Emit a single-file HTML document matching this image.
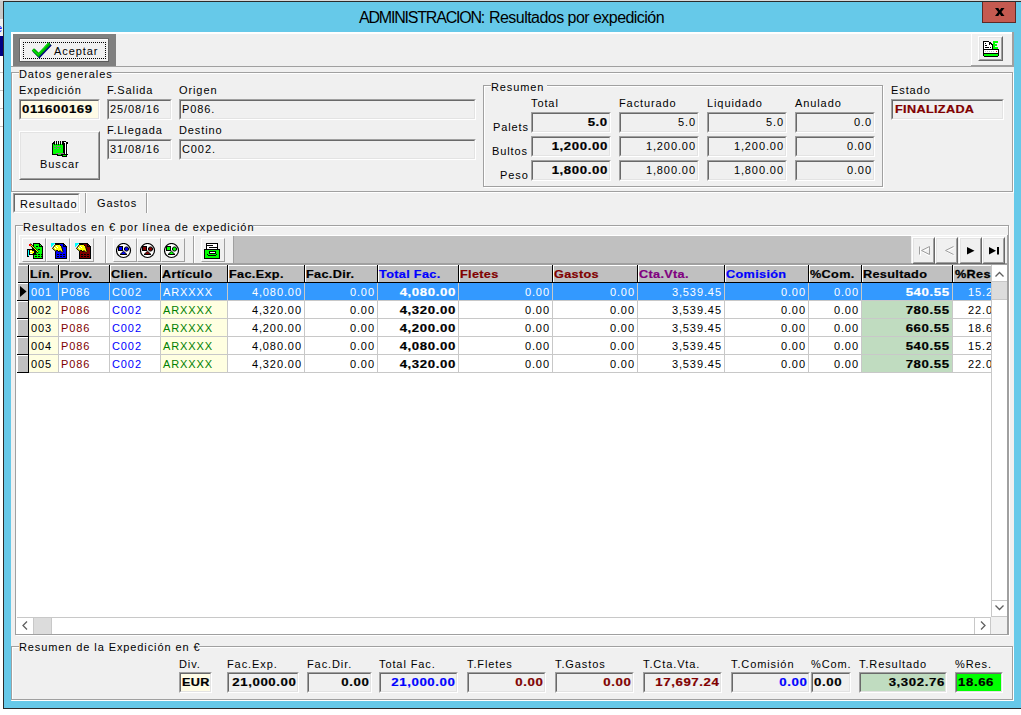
<!DOCTYPE html><html><head><meta charset="utf-8"><style>
html,body{margin:0;padding:0}
body{width:1021px;height:715px;overflow:hidden;position:relative;background:#FFFFFF;font-family:"Liberation Sans",sans-serif}
body div{position:absolute;box-sizing:content-box}
.t{font-size:11px;line-height:13px;white-space:pre;font-family:"Liberation Sans",sans-serif}
svg{position:absolute}
</style></head><body>
<div style="left:0px;top:0px;width:1021px;height:1px;background:#D9D9D9;"></div>
<div style="left:0px;top:1px;width:3px;height:18px;background:#C8C8C8;"></div>
<div style="left:0px;top:19px;width:3px;height:17px;background:#F0F0F0;"></div>
<div style="left:0;top:19px;width:3px;height:17px;overflow:hidden"><div class="t" style="left:-4px;top:3px;color:#0000FF">e</div></div>
<div style="left:0px;top:36px;width:3px;height:20px;background:#000080;"></div>
<div style="left:0px;top:72px;width:3px;height:1px;background:#C8C8C8;"></div>
<div style="left:0px;top:90px;width:3px;height:1px;background:#C8C8C8;"></div>
<div style="left:0px;top:108px;width:3px;height:1px;background:#C8C8C8;"></div>
<div style="left:0px;top:126px;width:3px;height:1px;background:#C8C8C8;"></div>
<div style="left:3px;top:1px;width:1018px;height:708px;background:#2B2B2B;"></div>
<div style="left:4px;top:2px;width:1017px;height:706px;background:#66C9E9;"></div>
<div style="left:359px;top:9px;font-size:16px;line-height:18px;white-space:pre;color:#000;letter-spacing:-1.2px">ADMINISTRACION:</div>
<div style="left:489px;top:9px;font-size:16px;line-height:18px;white-space:pre;color:#000;letter-spacing:-0.54px">Resultados por expedición</div>
<div style="left:982px;top:2px;width:32px;height:20px;background:#C55A50;border:1px solid #5E2A26;border-top:0"></div>
<svg style="left:995px;top:8px" width="10" height="8" viewBox="0 0 10 8"><path d="M0 0 H3.3 L4.75 2.3 L6.2 0 H9.5 L6.4 4 L9.5 8 H6.2 L4.75 5.7 L3.3 8 H0 L3.1 4 Z" fill="#000"/></svg>
<div style="left:11px;top:32px;width:1003px;height:669px;background:#F0F0F0;"></div>
<div style="left:11px;top:32px;width:960px;height:2px;background:#FFFFFF;"></div>
<div style="left:11px;top:32px;width:2px;height:34px;background:#FFFFFF;"></div>
<div style="left:11px;top:66px;width:1003px;height:1px;background:#A0A0A0;"></div>
<div style="left:13px;top:34px;width:103px;height:32px;background:#808080;"></div>
<div style="left:19px;top:38px;width:90px;height:24px;background:#696969;"></div>
<div style="left:20px;top:39px;width:88px;height:22px;background:#FFFFFF;"></div>
<div style="left:21px;top:40px;width:87px;height:21px;background:#F0F0F0;"></div>
<div style="left:20px;top:61px;width:89px;height:1px;background:#5A5A5A;"></div>
<div style="left:23px;top:42px;width:81px;height:15px;border:1px dotted #000"></div>
<svg style="left:30px;top:40px" width="22" height="20" viewBox="0 0 22 20"><path d="M4 10.5 L8.5 15 L18.5 4.5" fill="none" stroke="#000080" stroke-width="3.4" stroke-linecap="square" stroke-linejoin="miter" transform="translate(0.8,1)"/><path d="M4 10.5 L8.5 15 L18.5 4.5" fill="none" stroke="#00B000" stroke-width="3.2" stroke-linecap="square" stroke-linejoin="miter"/><path d="M3 10 L8.3 14.6 L18 3.6" fill="none" stroke="#00FF00" stroke-width="1"/></svg>
<div class="t" style="left:54px;top:45px;color:#000;letter-spacing:0.9px;transform-origin:0 0;-webkit-text-stroke:0px #000;">Aceptar</div>
<div style="left:971px;top:32px;width:42px;height:2px;background:#FFFFFF;"></div>
<div style="left:971px;top:32px;width:1px;height:34px;background:#FFFFFF;"></div>
<div style="left:1012px;top:32px;width:2px;height:35px;background:#A0A0A0;"></div>
<div style="left:971px;top:65px;width:43px;height:2px;background:#A0A0A0;"></div>
<div style="left:978px;top:36px;width:23px;height:23px;border-style:solid;border-width:1px;border-color:#FFFFFF #696969 #696969 #FFFFFF;background:#F0F0F0"></div>
<div style="left:979px;top:37px;width:21px;height:21px;border-style:solid;border-width:1px;border-color:#E3E3E3 #A0A0A0 #A0A0A0 #E3E3E3"></div>
<svg style="left:983px;top:41px" width="17" height="16" viewBox="0 0 17 16" shape-rendering="crispEdges">
<rect x="0" y="0" width="7" height="9" fill="#000"/><path d="M6 0 L10 4 V9 H6 Z" fill="#000"/>
<rect x="1" y="1" width="5" height="7" fill="#FFF"/><path d="M6 1.5 L9 4.5 V8 H6 Z" fill="#FFF"/>
<rect x="6" y="0" width="1" height="1" fill="#F0F0F0"/>
<rect x="2" y="2" width="1" height="1" fill="#000"/><rect x="2" y="4" width="2" height="1" fill="#000"/>
<rect x="2" y="6" width="4" height="1" fill="#000"/><rect x="7" y="6" width="1" height="1" fill="#000"/><rect x="6" y="2" width="1" height="2" fill="#000"/>
<rect x="10" y="0" width="2" height="8" fill="#00FF00"/><rect x="10" y="0" width="5" height="2" fill="#00FF00"/>
<rect x="10" y="3" width="4" height="2" fill="#00FF00"/><rect x="10" y="6" width="5" height="2" fill="#00FF00"/>
<rect x="0" y="8" width="16" height="8" fill="#000"/>
<rect x="1" y="9" width="14" height="3" fill="#FFF"/>
<rect x="2" y="10" width="1" height="1" fill="#C0C0C0"/><rect x="4" y="10" width="1" height="1" fill="#C0C0C0"/><rect x="6" y="10" width="1" height="1" fill="#C0C0C0"/><rect x="8" y="10" width="1" height="1" fill="#C0C0C0"/><rect x="10" y="10" width="1" height="1" fill="#C0C0C0"/>
<rect x="13" y="10" width="1" height="1" fill="#FF0000"/>
<rect x="1" y="13" width="14" height="2" fill="#00FF00"/>
<rect x="0" y="15" width="1" height="1" fill="#F0F0F0"/><rect x="15" y="15" width="1" height="1" fill="#F0F0F0"/>
</svg>
<div style="left:12px;top:73px;width:1000px;height:118px;border:1px solid #FFFFFF"></div>
<div style="left:11px;top:72px;width:1000px;height:118px;border:1px solid #A0A0A0"></div>
<div style="left:19px;top:67px;width:92px;height:12px;background:#F0F0F0;"></div>
<div class="t" style="left:19px;top:68px;color:#000;letter-spacing:0.9px;transform-origin:0 0;-webkit-text-stroke:0px #000;">Datos generales</div>
<div class="t" style="left:19px;top:84px;color:#000;letter-spacing:0.9px;transform-origin:0 0;-webkit-text-stroke:0px #000;">Expedición</div>
<div style="left:19px;top:99px;width:79px;height:19px;border-style:solid;border-width:1px;border-color:#A0A0A0 #FFFFFF #FFFFFF #A0A0A0"></div>
<div style="left:20px;top:100px;width:77px;height:17px;border-style:solid;border-width:1px;border-color:#696969 #E3E3E3 #E3E3E3 #696969;background:#FFFCE6"></div>
<div class="t" style="left:22px;top:103px;color:#000;font-weight:700;letter-spacing:0.5px;transform:scaleX(1.2);transform-origin:0 0;-webkit-text-stroke:0.2px #000;">011600169</div>
<div class="t" style="left:107px;top:84px;color:#000;letter-spacing:0.9px;transform-origin:0 0;-webkit-text-stroke:0px #000;">F.Salida</div>
<div style="left:107px;top:99px;width:63px;height:19px;border-style:solid;border-width:1px;border-color:#A0A0A0 #FFFFFF #FFFFFF #A0A0A0"></div>
<div style="left:108px;top:100px;width:61px;height:17px;border-style:solid;border-width:1px;border-color:#696969 #E3E3E3 #E3E3E3 #696969;background:#F0F0F0"></div>
<div class="t" style="left:110px;top:103px;color:#000;letter-spacing:0.9px;transform-origin:0 0;-webkit-text-stroke:0px #000;">25/08/16</div>
<div class="t" style="left:107px;top:124px;color:#000;letter-spacing:0.9px;transform-origin:0 0;-webkit-text-stroke:0px #000;">F.Llegada</div>
<div style="left:107px;top:139px;width:63px;height:19px;border-style:solid;border-width:1px;border-color:#A0A0A0 #FFFFFF #FFFFFF #A0A0A0"></div>
<div style="left:108px;top:140px;width:61px;height:17px;border-style:solid;border-width:1px;border-color:#696969 #E3E3E3 #E3E3E3 #696969;background:#F0F0F0"></div>
<div class="t" style="left:110px;top:143px;color:#000;letter-spacing:0.9px;transform-origin:0 0;-webkit-text-stroke:0px #000;">31/08/16</div>
<div class="t" style="left:179px;top:84px;color:#000;letter-spacing:0.9px;transform-origin:0 0;-webkit-text-stroke:0px #000;">Origen</div>
<div style="left:179px;top:99px;width:295px;height:19px;border-style:solid;border-width:1px;border-color:#A0A0A0 #FFFFFF #FFFFFF #A0A0A0"></div>
<div style="left:180px;top:100px;width:293px;height:17px;border-style:solid;border-width:1px;border-color:#696969 #E3E3E3 #E3E3E3 #696969;background:#F0F0F0"></div>
<div class="t" style="left:182px;top:103px;color:#000;letter-spacing:0.9px;transform-origin:0 0;-webkit-text-stroke:0px #000;">P086.</div>
<div class="t" style="left:179px;top:124px;color:#000;letter-spacing:0.9px;transform-origin:0 0;-webkit-text-stroke:0px #000;">Destino</div>
<div style="left:179px;top:139px;width:295px;height:19px;border-style:solid;border-width:1px;border-color:#A0A0A0 #FFFFFF #FFFFFF #A0A0A0"></div>
<div style="left:180px;top:140px;width:293px;height:17px;border-style:solid;border-width:1px;border-color:#696969 #E3E3E3 #E3E3E3 #696969;background:#F0F0F0"></div>
<div class="t" style="left:182px;top:143px;color:#000;letter-spacing:0.9px;transform-origin:0 0;-webkit-text-stroke:0px #000;">C002.</div>
<div style="left:19px;top:131px;width:79px;height:47px;border-style:solid;border-width:1px;border-color:#FFFFFF #696969 #696969 #FFFFFF;background:#F0F0F0"></div>
<div style="left:20px;top:132px;width:77px;height:45px;border-style:solid;border-width:1px;border-color:#E3E3E3 #A0A0A0 #A0A0A0 #E3E3E3"></div>
<svg style="left:52px;top:140px" width="17" height="17" viewBox="0 0 17 17" shape-rendering="crispEdges">
<rect x="12" y="2" width="4" height="13" fill="#000"/>
<rect x="13" y="3" width="1" height="11" fill="#FFF"/><rect x="15" y="4" width="1" height="10" fill="#FFF"/>
<rect x="11" y="1" width="3" height="2" fill="#FFF"/><rect x="11" y="1" width="3" height="1" fill="#000"/>
<rect x="0" y="2" width="12" height="13" fill="#000"/>
<rect x="1" y="4" width="10" height="9" fill="#00FF00"/>
<rect x="1" y="13" width="3" height="1" fill="#00FF00"/>
<rect x="2" y="1" width="1" height="4" fill="#000"/><rect x="4" y="1" width="1" height="4" fill="#000"/><rect x="6" y="1" width="1" height="4" fill="#000"/><rect x="8" y="1" width="1" height="4" fill="#000"/><rect x="10" y="1" width="1" height="4" fill="#000"/>
<rect x="3" y="2" width="1" height="2" fill="#F0F0F0"/><rect x="5" y="2" width="1" height="2" fill="#F0F0F0"/><rect x="7" y="2" width="1" height="2" fill="#F0F0F0"/><rect x="9" y="2" width="1" height="2" fill="#F0F0F0"/>
<rect x="0" y="2" width="1" height="1" fill="#F0F0F0"/>
<rect x="5" y="14" width="5" height="2" fill="#000"/><rect x="6" y="14" width="3" height="1" fill="#00FF00"/>
<rect x="10" y="15" width="5" height="2" fill="#000"/><rect x="11" y="15" width="3" height="1" fill="#00FF00"/>
<rect x="4" y="13" width="8" height="1" fill="#808080"/>
<rect x="2" y="6" width="2" height="1" fill="#8C6E8C"/><rect x="5" y="6" width="3" height="1" fill="#8C6E8C"/>
<rect x="2" y="8" width="2" height="1" fill="#8C6E8C"/><rect x="5" y="8" width="2" height="1" fill="#8C6E8C"/><rect x="8" y="8" width="1" height="1" fill="#8C6E8C"/>
</svg>
<div class="t" style="left:40px;top:158px;color:#000;letter-spacing:0.9px;transform-origin:0 0;-webkit-text-stroke:0px #000;">Buscar</div>
<div style="left:484px;top:86px;width:398px;height:100px;border:1px solid #FFFFFF"></div>
<div style="left:483px;top:85px;width:398px;height:100px;border:1px solid #A0A0A0"></div>
<div style="left:491px;top:80px;width:56px;height:12px;background:#F0F0F0;"></div>
<div class="t" style="left:491px;top:81px;color:#000;letter-spacing:0.9px;transform-origin:0 0;-webkit-text-stroke:0px #000;">Resumen</div>
<div class="t" style="left:531px;top:97px;color:#000;letter-spacing:0.9px;transform-origin:0 0;-webkit-text-stroke:0px #000;">Total</div>
<div class="t" style="left:619px;top:97px;color:#000;letter-spacing:0.9px;transform-origin:0 0;-webkit-text-stroke:0px #000;">Facturado</div>
<div class="t" style="left:707px;top:97px;color:#000;letter-spacing:0.9px;transform-origin:0 0;-webkit-text-stroke:0px #000;">Liquidado</div>
<div class="t" style="left:795px;top:97px;color:#000;letter-spacing:0.9px;transform-origin:0 0;-webkit-text-stroke:0px #000;">Anulado</div>
<div class="t" style="left:493px;top:121px;color:#000;letter-spacing:0.9px;transform-origin:0 0;-webkit-text-stroke:0px #000;">Palets</div>
<div class="t" style="left:492px;top:145px;color:#000;letter-spacing:0.9px;transform-origin:0 0;-webkit-text-stroke:0px #000;">Bultos</div>
<div class="t" style="left:500px;top:169px;color:#000;letter-spacing:0.9px;transform-origin:0 0;-webkit-text-stroke:0px #000;">Peso</div>
<div style="left:531px;top:112px;width:78px;height:19px;border-style:solid;border-width:1px;border-color:#A0A0A0 #FFFFFF #FFFFFF #A0A0A0"></div>
<div style="left:532px;top:113px;width:76px;height:17px;border-style:solid;border-width:1px;border-color:#696969 #E3E3E3 #E3E3E3 #696969;background:#F0F0F0"></div>
<div class="t" style="right:413.40px;top:116px;color:#000;font-weight:700;letter-spacing:0.5px;transform:scaleX(1.2);transform-origin:100% 0;-webkit-text-stroke:0.2px #000;text-align:right;">5.0</div>
<div style="left:619px;top:112px;width:78px;height:19px;border-style:solid;border-width:1px;border-color:#A0A0A0 #FFFFFF #FFFFFF #A0A0A0"></div>
<div style="left:620px;top:113px;width:76px;height:17px;border-style:solid;border-width:1px;border-color:#696969 #E3E3E3 #E3E3E3 #696969;background:#F0F0F0"></div>
<div class="t" style="right:325.10px;top:116px;color:#000;letter-spacing:0.9px;transform-origin:100% 0;-webkit-text-stroke:0px #000;text-align:right;">5.0</div>
<div style="left:707px;top:112px;width:78px;height:19px;border-style:solid;border-width:1px;border-color:#A0A0A0 #FFFFFF #FFFFFF #A0A0A0"></div>
<div style="left:708px;top:113px;width:76px;height:17px;border-style:solid;border-width:1px;border-color:#696969 #E3E3E3 #E3E3E3 #696969;background:#F0F0F0"></div>
<div class="t" style="right:237.10px;top:116px;color:#000;letter-spacing:0.9px;transform-origin:100% 0;-webkit-text-stroke:0px #000;text-align:right;">5.0</div>
<div style="left:795px;top:112px;width:78px;height:19px;border-style:solid;border-width:1px;border-color:#A0A0A0 #FFFFFF #FFFFFF #A0A0A0"></div>
<div style="left:796px;top:113px;width:76px;height:17px;border-style:solid;border-width:1px;border-color:#696969 #E3E3E3 #E3E3E3 #696969;background:#F0F0F0"></div>
<div class="t" style="right:149.10px;top:116px;color:#000;letter-spacing:0.9px;transform-origin:100% 0;-webkit-text-stroke:0px #000;text-align:right;">0.0</div>
<div style="left:531px;top:136px;width:78px;height:19px;border-style:solid;border-width:1px;border-color:#A0A0A0 #FFFFFF #FFFFFF #A0A0A0"></div>
<div style="left:532px;top:137px;width:76px;height:17px;border-style:solid;border-width:1px;border-color:#696969 #E3E3E3 #E3E3E3 #696969;background:#F0F0F0"></div>
<div class="t" style="right:413.40px;top:140px;color:#000;font-weight:700;letter-spacing:0.5px;transform:scaleX(1.2);transform-origin:100% 0;-webkit-text-stroke:0.2px #000;text-align:right;">1,200.00</div>
<div style="left:619px;top:136px;width:78px;height:19px;border-style:solid;border-width:1px;border-color:#A0A0A0 #FFFFFF #FFFFFF #A0A0A0"></div>
<div style="left:620px;top:137px;width:76px;height:17px;border-style:solid;border-width:1px;border-color:#696969 #E3E3E3 #E3E3E3 #696969;background:#F0F0F0"></div>
<div class="t" style="right:325.10px;top:140px;color:#000;letter-spacing:0.9px;transform-origin:100% 0;-webkit-text-stroke:0px #000;text-align:right;">1,200.00</div>
<div style="left:707px;top:136px;width:78px;height:19px;border-style:solid;border-width:1px;border-color:#A0A0A0 #FFFFFF #FFFFFF #A0A0A0"></div>
<div style="left:708px;top:137px;width:76px;height:17px;border-style:solid;border-width:1px;border-color:#696969 #E3E3E3 #E3E3E3 #696969;background:#F0F0F0"></div>
<div class="t" style="right:237.10px;top:140px;color:#000;letter-spacing:0.9px;transform-origin:100% 0;-webkit-text-stroke:0px #000;text-align:right;">1,200.00</div>
<div style="left:795px;top:136px;width:78px;height:19px;border-style:solid;border-width:1px;border-color:#A0A0A0 #FFFFFF #FFFFFF #A0A0A0"></div>
<div style="left:796px;top:137px;width:76px;height:17px;border-style:solid;border-width:1px;border-color:#696969 #E3E3E3 #E3E3E3 #696969;background:#F0F0F0"></div>
<div class="t" style="right:149.10px;top:140px;color:#000;letter-spacing:0.9px;transform-origin:100% 0;-webkit-text-stroke:0px #000;text-align:right;">0.00</div>
<div style="left:531px;top:160px;width:78px;height:19px;border-style:solid;border-width:1px;border-color:#A0A0A0 #FFFFFF #FFFFFF #A0A0A0"></div>
<div style="left:532px;top:161px;width:76px;height:17px;border-style:solid;border-width:1px;border-color:#696969 #E3E3E3 #E3E3E3 #696969;background:#F0F0F0"></div>
<div class="t" style="right:413.40px;top:164px;color:#000;font-weight:700;letter-spacing:0.5px;transform:scaleX(1.2);transform-origin:100% 0;-webkit-text-stroke:0.2px #000;text-align:right;">1,800.00</div>
<div style="left:619px;top:160px;width:78px;height:19px;border-style:solid;border-width:1px;border-color:#A0A0A0 #FFFFFF #FFFFFF #A0A0A0"></div>
<div style="left:620px;top:161px;width:76px;height:17px;border-style:solid;border-width:1px;border-color:#696969 #E3E3E3 #E3E3E3 #696969;background:#F0F0F0"></div>
<div class="t" style="right:325.10px;top:164px;color:#000;letter-spacing:0.9px;transform-origin:100% 0;-webkit-text-stroke:0px #000;text-align:right;">1,800.00</div>
<div style="left:707px;top:160px;width:78px;height:19px;border-style:solid;border-width:1px;border-color:#A0A0A0 #FFFFFF #FFFFFF #A0A0A0"></div>
<div style="left:708px;top:161px;width:76px;height:17px;border-style:solid;border-width:1px;border-color:#696969 #E3E3E3 #E3E3E3 #696969;background:#F0F0F0"></div>
<div class="t" style="right:237.10px;top:164px;color:#000;letter-spacing:0.9px;transform-origin:100% 0;-webkit-text-stroke:0px #000;text-align:right;">1,800.00</div>
<div style="left:795px;top:160px;width:78px;height:19px;border-style:solid;border-width:1px;border-color:#A0A0A0 #FFFFFF #FFFFFF #A0A0A0"></div>
<div style="left:796px;top:161px;width:76px;height:17px;border-style:solid;border-width:1px;border-color:#696969 #E3E3E3 #E3E3E3 #696969;background:#F0F0F0"></div>
<div class="t" style="right:149.10px;top:164px;color:#000;letter-spacing:0.9px;transform-origin:100% 0;-webkit-text-stroke:0px #000;text-align:right;">0.00</div>
<div class="t" style="left:891px;top:84px;color:#000;letter-spacing:0.9px;transform-origin:0 0;-webkit-text-stroke:0px #000;">Estado</div>
<div style="left:891px;top:99px;width:111px;height:19px;border-style:solid;border-width:1px;border-color:#A0A0A0 #FFFFFF #FFFFFF #A0A0A0"></div>
<div style="left:892px;top:100px;width:109px;height:17px;border-style:solid;border-width:1px;border-color:#696969 #E3E3E3 #E3E3E3 #696969;background:#F0F0F0"></div>
<div class="t" style="left:895px;top:103px;color:#800000;font-weight:700;letter-spacing:0.3px;transform:scaleX(1.15);transform-origin:0 0;-webkit-text-stroke:0.2px #800000;">FINALIZADA</div>
<div style="left:13px;top:193px;width:65px;height:18px;border-style:solid;border-width:1px;border-color:#A0A0A0 #FFFFFF #FFFFFF #A0A0A0"></div>
<div style="left:14px;top:194px;width:63px;height:16px;border-style:solid;border-width:1px;border-color:#696969 #E3E3E3 #E3E3E3 #696969;background:#F8F8F8"></div>
<div class="t" style="left:20px;top:198px;color:#000;letter-spacing:0.9px;transform-origin:0 0;-webkit-text-stroke:0px #000;">Resultado</div>
<div style="left:85px;top:193px;width:1px;height:20px;background:#A0A0A0;"></div>
<div style="left:86px;top:193px;width:1px;height:20px;background:#FFFFFF;"></div>
<div class="t" style="left:97px;top:197px;color:#000;letter-spacing:0.9px;transform-origin:0 0;-webkit-text-stroke:0px #000;">Gastos</div>
<div style="left:146px;top:193px;width:1px;height:20px;background:#A0A0A0;"></div>
<div style="left:147px;top:193px;width:1px;height:20px;background:#FFFFFF;"></div>
<div style="left:16px;top:226px;width:992px;height:408px;border:1px solid #FFFFFF"></div>
<div style="left:15px;top:225px;width:992px;height:408px;border:1px solid #A0A0A0"></div>
<div style="left:23px;top:220px;width:230px;height:12px;background:#F0F0F0;"></div>
<div class="t" style="left:23px;top:221px;color:#000;letter-spacing:0.9px;transform-origin:0 0;-webkit-text-stroke:0px #000;">Resultados en € por línea de expedición</div>
<div style="left:19px;top:235px;width:990px;height:29px;background:#F0F0F0;"></div>
<div style="left:19px;top:235px;width:990px;height:1px;background:#FFFFFF;"></div>
<div style="left:19px;top:235px;width:1px;height:29px;background:#FFFFFF;"></div>
<div style="left:19px;top:263px;width:990px;height:2px;background:#A0A0A0;"></div>
<div style="left:1007px;top:235px;width:2px;height:30px;background:#A0A0A0;"></div>
<div style="left:234px;top:236px;width:677px;height:27px;background:#C0C0C0;"></div>
<div style="left:22px;top:238px;width:22px;height:22px;background:#F0F0F0;border-style:solid;border-width:1px;border-color:#FFFFFF #A0A0A0 #A0A0A0 #FFFFFF"></div>
<div style="left:46px;top:238px;width:22px;height:22px;background:#F0F0F0;border-style:solid;border-width:1px;border-color:#FFFFFF #A0A0A0 #A0A0A0 #FFFFFF"></div>
<div style="left:70px;top:238px;width:22px;height:22px;background:#F0F0F0;border-style:solid;border-width:1px;border-color:#FFFFFF #A0A0A0 #A0A0A0 #FFFFFF"></div>
<div style="left:105px;top:236px;width:1px;height:27px;background:#A0A0A0;"></div>
<div style="left:106px;top:236px;width:1px;height:27px;background:#FFFFFF;"></div>
<div style="left:113px;top:238px;width:22px;height:22px;background:#F0F0F0;border-style:solid;border-width:1px;border-color:#FFFFFF #A0A0A0 #A0A0A0 #FFFFFF"></div>
<div style="left:137px;top:238px;width:22px;height:22px;background:#F0F0F0;border-style:solid;border-width:1px;border-color:#FFFFFF #A0A0A0 #A0A0A0 #FFFFFF"></div>
<div style="left:161px;top:238px;width:22px;height:22px;background:#F0F0F0;border-style:solid;border-width:1px;border-color:#FFFFFF #A0A0A0 #A0A0A0 #FFFFFF"></div>
<div style="left:193px;top:236px;width:1px;height:27px;background:#A0A0A0;"></div>
<div style="left:194px;top:236px;width:1px;height:27px;background:#FFFFFF;"></div>
<div style="left:201px;top:238px;width:22px;height:22px;background:#F0F0F0;border-style:solid;border-width:1px;border-color:#FFFFFF #A0A0A0 #A0A0A0 #FFFFFF"></div>
<div style="left:233px;top:236px;width:1px;height:27px;background:#A0A0A0;"></div>
<svg style="left:27px;top:243px" width="16" height="16" viewBox="0 0 16 16" shape-rendering="crispEdges"><path d="M6.5 0.5 H12.5 L15.5 3.5 V15.5 H6.5 Z" fill="#00FF00" stroke="#000"/><path d="M12.5 0.5 V3.5 H15.5" fill="none" stroke="#000"/><rect x="8" y="11" width="2" height="1" fill="#000"/><rect x="11" y="11" width="2" height="1" fill="#000"/><rect x="14" y="11" width="2" height="1" fill="#000"/><rect x="8" y="13" width="2" height="1" fill="#000"/><rect x="11" y="13" width="2" height="1" fill="#000"/><rect x="14" y="13" width="2" height="1" fill="#000"/><rect x="9" y="3" width="2" height="1" fill="#000"/><rect x="11" y="6" width="2" height="1" fill="#000"/><rect x="0" y="6" width="2" height="8" fill="#000"/><rect x="0.5" y="7" width="1" height="6" fill="#00FFFF"/><path d="M2 6 H5 L6 5 H7 V6 L5 7 H9 L10 8 L7 9 H8 L8 10 H6 L7 11 H3 L2 12 Z" fill="#FFFF00" stroke="#000" stroke-width="1"/><path d="M3 8 H5 M3 10 H5" stroke="#FFF" stroke-width="1"/><path d="M3 1 L11 9.5" stroke="#000" stroke-width="2" shape-rendering="auto"/><path d="M3.5 1.5 L11 9" stroke="#FFFF00" stroke-width="1" shape-rendering="auto"/><rect x="2" y="1" width="2" height="2" fill="#FF0000"/></svg>
<svg style="left:51px;top:243px" width="16" height="16" viewBox="0 0 16 16" shape-rendering="crispEdges"><path d="M4.5 0.5 H12.5 L15.5 3.5 V15.5 H4.5 Z" fill="#0000FF" stroke="#000"/><path d="M12.5 0.5 V3.5 H15.5" fill="none" stroke="#000"/><rect x="6" y="11" width="2" height="1" fill="#000"/><rect x="9" y="11" width="2" height="1" fill="#000"/><rect x="12" y="11" width="2" height="1" fill="#000"/><rect x="6" y="13" width="2" height="1" fill="#000"/><rect x="9" y="13" width="2" height="1" fill="#000"/><rect x="12" y="13" width="2" height="1" fill="#000"/><path d="M0 0 H4 L0 4 Z" fill="#00FFFF"/><path d="M1.5 5.5 L4.5 1.5 H8.5 L10.5 3.5 L12 8.5 L11 9.5 L9 7.5 L8 9 L6 7 L5 8.5 Z" fill="#FFFF00" stroke="#000" stroke-width="1" shape-rendering="auto"/><path d="M3 4 L5 6 M5 3 L7 5" stroke="#FFF" stroke-width="1" shape-rendering="auto"/></svg>
<svg style="left:75px;top:243px" width="16" height="16" viewBox="0 0 16 16" shape-rendering="crispEdges"><path d="M4.5 0.5 H12.5 L15.5 3.5 V15.5 H4.5 Z" fill="#800000" stroke="#000"/><path d="M12.5 0.5 V3.5 H15.5" fill="none" stroke="#000"/><rect x="6" y="11" width="2" height="1" fill="#000"/><rect x="9" y="11" width="2" height="1" fill="#000"/><rect x="12" y="11" width="2" height="1" fill="#000"/><rect x="6" y="13" width="2" height="1" fill="#000"/><rect x="9" y="13" width="2" height="1" fill="#000"/><rect x="12" y="13" width="2" height="1" fill="#000"/><path d="M0 0 H4 L0 4 Z" fill="#00FFFF"/><path d="M1.5 5.5 L4.5 1.5 H8.5 L10.5 3.5 L12 8.5 L11 9.5 L9 7.5 L8 9 L6 7 L5 8.5 Z" fill="#FFFF00" stroke="#000" stroke-width="1" shape-rendering="auto"/><path d="M3 4 L5 6 M5 3 L7 5" stroke="#FFF" stroke-width="1" shape-rendering="auto"/></svg>
<svg style="left:116px;top:243px" width="16" height="16" viewBox="0 0 16 16">
<circle cx="7.5" cy="7.5" r="7" fill="#FFF" stroke="#000" stroke-width="1.2"/>
<rect x="2.5" y="3.5" width="4" height="4" fill="#0000FF" stroke="#000" stroke-width="1"/>
<circle cx="10.5" cy="6" r="2.1" fill="#0000FF" stroke="#000" stroke-width="1"/>
<path d="M4 11.5 L7.5 8.2 L11 11.5 Z" fill="#0000FF" stroke="#000" stroke-width="1"/>
</svg>
<svg style="left:140px;top:243px" width="16" height="16" viewBox="0 0 16 16">
<circle cx="7.5" cy="7.5" r="7" fill="#FFF" stroke="#000" stroke-width="1.2"/>
<rect x="2.5" y="3.5" width="4" height="4" fill="#800000" stroke="#000" stroke-width="1"/>
<circle cx="10.5" cy="6" r="2.1" fill="#800000" stroke="#000" stroke-width="1"/>
<path d="M4 11.5 L7.5 8.2 L11 11.5 Z" fill="#800000" stroke="#000" stroke-width="1"/>
</svg>
<svg style="left:164px;top:243px" width="16" height="16" viewBox="0 0 16 16">
<circle cx="7.5" cy="7.5" r="7" fill="#FFF" stroke="#000" stroke-width="1.2"/>
<rect x="2.5" y="3.5" width="4" height="4" fill="#00FF00" stroke="#000" stroke-width="1"/>
<circle cx="10.5" cy="6" r="2.1" fill="#00FF00" stroke="#000" stroke-width="1"/>
<path d="M4 11.5 L7.5 8.2 L11 11.5 Z" fill="#00FF00" stroke="#000" stroke-width="1"/>
</svg>
<svg style="left:204px;top:243px" width="16" height="16" viewBox="0 0 16 16" shape-rendering="crispEdges">
<rect x="2" y="0" width="12" height="7" fill="#000"/>
<rect x="3" y="1" width="10" height="5" fill="#FFF"/>
<rect x="3" y="2" width="6" height="1" fill="#000"/><rect x="5" y="4" width="8" height="1" fill="#000"/>
<rect x="0" y="6" width="16" height="10" fill="#000"/>
<rect x="1" y="7" width="14" height="8" fill="#00FF00"/>
<rect x="5" y="8" width="7" height="3" fill="#000"/><rect x="6" y="9" width="5" height="1" fill="#FFF"/>
<rect x="4" y="12" width="8" height="1" fill="#000"/><rect x="3" y="11" width="1" height="1" fill="#000"/><rect x="12" y="11" width="1" height="1" fill="#000"/>
</svg>
<div style="left:912px;top:237px;width:21px;height:25px;border-style:solid;border-width:1px;border-color:#FFFFFF #696969 #696969 #FFFFFF;background:#F0F0F0"></div>
<div style="left:913px;top:238px;width:19px;height:23px;border-style:solid;border-width:1px;border-color:#E3E3E3 #A0A0A0 #A0A0A0 #E3E3E3"></div>
<div style="left:935px;top:237px;width:21px;height:25px;border-style:solid;border-width:1px;border-color:#FFFFFF #696969 #696969 #FFFFFF;background:#F0F0F0"></div>
<div style="left:936px;top:238px;width:19px;height:23px;border-style:solid;border-width:1px;border-color:#E3E3E3 #A0A0A0 #A0A0A0 #E3E3E3"></div>
<div style="left:959px;top:237px;width:21px;height:25px;border-style:solid;border-width:1px;border-color:#FFFFFF #696969 #696969 #FFFFFF;background:#F0F0F0"></div>
<div style="left:960px;top:238px;width:19px;height:23px;border-style:solid;border-width:1px;border-color:#E3E3E3 #A0A0A0 #A0A0A0 #E3E3E3"></div>
<div style="left:982px;top:237px;width:21px;height:25px;border-style:solid;border-width:1px;border-color:#FFFFFF #696969 #696969 #FFFFFF;background:#F0F0F0"></div>
<div style="left:983px;top:238px;width:19px;height:23px;border-style:solid;border-width:1px;border-color:#E3E3E3 #A0A0A0 #A0A0A0 #E3E3E3"></div>
<svg style="left:918px;top:246px" width="13" height="10" viewBox="0 0 13 10"><path d="M1.5 1.5 V9.5 M11.5 0.5 L3.5 5 L11.5 9.5" fill="none" stroke="#FFFFFF" stroke-width="1" transform="translate(1,1)"/><path d="M1.5 0.5 V8.5 M11.5 0.5 L3.5 4.5 L11.5 8.5 Z" fill="none" stroke="#A0A0A0" stroke-width="1"/></svg>
<svg style="left:942px;top:246px" width="13" height="10" viewBox="0 0 13 10"><path d="M11.5 0.5 L3.5 4.5 L11.5 8.5" fill="none" stroke="#FFFFFF" stroke-width="1" transform="translate(1,1)"/><path d="M11.5 0.5 L3.5 4.5 L11.5 8.5" fill="none" stroke="#A0A0A0" stroke-width="1"/></svg>
<svg style="left:967px;top:247px" width="8" height="8" viewBox="0 0 8 8"><path d="M0 0 L7.5 3.75 L0 7.5 Z" fill="#000"/></svg>
<svg style="left:989px;top:247px" width="11" height="8" viewBox="0 0 11 8"><path d="M0 0 L7 3.75 L0 7.5 Z" fill="#000"/><rect x="8" y="0" width="2" height="7.5" fill="#000"/></svg>
<div style="left:16px;top:265px;width:992px;height:369px;background:#FFFFFF;"></div>
<div style="left:17px;top:265px;width:974px;height:17px;background:#C0C0C0;"></div>
<div style="left:17px;top:265px;width:974px;height:1px;background:#FFFFFF;"></div>
<div style="left:17px;top:282px;width:974px;height:1px;background:#000000;"></div>
<div style="left:28px;top:265px;width:1px;height:17px;background:#000000;"></div>
<div style="left:29px;top:265px;width:1px;height:17px;background:#FFFFFF;"></div>
<div style="left:58px;top:265px;width:1px;height:17px;background:#000000;"></div>
<div style="left:59px;top:265px;width:1px;height:17px;background:#FFFFFF;"></div>
<div style="left:109px;top:265px;width:1px;height:17px;background:#000000;"></div>
<div style="left:110px;top:265px;width:1px;height:17px;background:#FFFFFF;"></div>
<div style="left:160px;top:265px;width:1px;height:17px;background:#000000;"></div>
<div style="left:161px;top:265px;width:1px;height:17px;background:#FFFFFF;"></div>
<div style="left:227px;top:265px;width:1px;height:17px;background:#000000;"></div>
<div style="left:228px;top:265px;width:1px;height:17px;background:#FFFFFF;"></div>
<div style="left:304px;top:265px;width:1px;height:17px;background:#000000;"></div>
<div style="left:305px;top:265px;width:1px;height:17px;background:#FFFFFF;"></div>
<div style="left:377px;top:265px;width:1px;height:17px;background:#000000;"></div>
<div style="left:378px;top:265px;width:1px;height:17px;background:#FFFFFF;"></div>
<div style="left:458px;top:265px;width:1px;height:17px;background:#000000;"></div>
<div style="left:459px;top:265px;width:1px;height:17px;background:#FFFFFF;"></div>
<div style="left:552px;top:265px;width:1px;height:17px;background:#000000;"></div>
<div style="left:553px;top:265px;width:1px;height:17px;background:#FFFFFF;"></div>
<div style="left:637px;top:265px;width:1px;height:17px;background:#000000;"></div>
<div style="left:638px;top:265px;width:1px;height:17px;background:#FFFFFF;"></div>
<div style="left:724px;top:265px;width:1px;height:17px;background:#000000;"></div>
<div style="left:725px;top:265px;width:1px;height:17px;background:#FFFFFF;"></div>
<div style="left:808px;top:265px;width:1px;height:17px;background:#000000;"></div>
<div style="left:809px;top:265px;width:1px;height:17px;background:#FFFFFF;"></div>
<div style="left:861px;top:265px;width:1px;height:17px;background:#000000;"></div>
<div style="left:862px;top:265px;width:1px;height:17px;background:#FFFFFF;"></div>
<div style="left:952px;top:265px;width:1px;height:17px;background:#000000;"></div>
<div style="left:953px;top:265px;width:1px;height:17px;background:#FFFFFF;"></div>
<div class="t" style="left:30px;top:268px;color:#000;font-weight:700;letter-spacing:0.3px;transform:scaleX(1.15);transform-origin:0 0;-webkit-text-stroke:0.2px #000;">Lín.</div>
<div class="t" style="left:60px;top:268px;color:#000;font-weight:700;letter-spacing:0.3px;transform:scaleX(1.15);transform-origin:0 0;-webkit-text-stroke:0.2px #000;">Prov.</div>
<div class="t" style="left:111px;top:268px;color:#000;font-weight:700;letter-spacing:0.3px;transform:scaleX(1.15);transform-origin:0 0;-webkit-text-stroke:0.2px #000;">Clien.</div>
<div class="t" style="left:162px;top:268px;color:#000;font-weight:700;letter-spacing:0.3px;transform:scaleX(1.15);transform-origin:0 0;-webkit-text-stroke:0.2px #000;">Artículo</div>
<div class="t" style="left:229px;top:268px;color:#000;font-weight:700;letter-spacing:0.3px;transform:scaleX(1.15);transform-origin:0 0;-webkit-text-stroke:0.2px #000;">Fac.Exp.</div>
<div class="t" style="left:306px;top:268px;color:#000;font-weight:700;letter-spacing:0.3px;transform:scaleX(1.15);transform-origin:0 0;-webkit-text-stroke:0.2px #000;">Fac.Dir.</div>
<div class="t" style="left:379px;top:268px;color:#0000FF;font-weight:700;letter-spacing:0.3px;transform:scaleX(1.15);transform-origin:0 0;-webkit-text-stroke:0.2px #0000FF;">Total Fac.</div>
<div class="t" style="left:460px;top:268px;color:#800000;font-weight:700;letter-spacing:0.3px;transform:scaleX(1.15);transform-origin:0 0;-webkit-text-stroke:0.2px #800000;">Fletes</div>
<div class="t" style="left:554px;top:268px;color:#800000;font-weight:700;letter-spacing:0.3px;transform:scaleX(1.15);transform-origin:0 0;-webkit-text-stroke:0.2px #800000;">Gastos</div>
<div class="t" style="left:639px;top:268px;color:#800080;font-weight:700;letter-spacing:0.3px;transform:scaleX(1.15);transform-origin:0 0;-webkit-text-stroke:0.2px #800080;">Cta.Vta.</div>
<div class="t" style="left:726px;top:268px;color:#0000FF;font-weight:700;letter-spacing:0.3px;transform:scaleX(1.15);transform-origin:0 0;-webkit-text-stroke:0.2px #0000FF;">Comisión</div>
<div class="t" style="left:810px;top:268px;color:#000;font-weight:700;letter-spacing:0.3px;transform:scaleX(1.15);transform-origin:0 0;-webkit-text-stroke:0.2px #000;">%Com.</div>
<div class="t" style="left:863px;top:268px;color:#000;font-weight:700;letter-spacing:0.3px;transform:scaleX(1.15);transform-origin:0 0;-webkit-text-stroke:0.2px #000;">Resultado</div>
<div style="left:953px;top:265px;width:38px;height:17px;overflow:hidden">
<div class="t" style="left:2px;top:3px;font-weight:700;letter-spacing:0.3px;transform:scaleX(1.15);transform-origin:0 0;-webkit-text-stroke:0.3px #000">%Res.</div>
</div>
<div style="left:17px;top:283px;width:11px;height:17px;background:#C0C0C0;"></div>
<div style="left:17px;top:283px;width:11px;height:1px;background:#FFFFFF;"></div>
<div style="left:17px;top:283px;width:1px;height:17px;background:#FFFFFF;"></div>
<div style="left:17px;top:300px;width:12px;height:1px;background:#000000;"></div>
<div style="left:28px;top:283px;width:1px;height:17px;background:#000000;"></div>
<div style="left:29px;top:283px;width:962px;height:17px;background:#3399FF;"></div>
<div style="left:29px;top:300px;width:962px;height:1px;background:#C8C8C8;"></div>
<div style="left:58px;top:283px;width:1px;height:17px;background:#C8C8C8;"></div>
<div style="left:109px;top:283px;width:1px;height:17px;background:#C8C8C8;"></div>
<div style="left:160px;top:283px;width:1px;height:17px;background:#C8C8C8;"></div>
<div style="left:227px;top:283px;width:1px;height:17px;background:#C8C8C8;"></div>
<div style="left:304px;top:283px;width:1px;height:17px;background:#C8C8C8;"></div>
<div style="left:377px;top:283px;width:1px;height:17px;background:#C8C8C8;"></div>
<div style="left:458px;top:283px;width:1px;height:17px;background:#C8C8C8;"></div>
<div style="left:552px;top:283px;width:1px;height:17px;background:#C8C8C8;"></div>
<div style="left:637px;top:283px;width:1px;height:17px;background:#C8C8C8;"></div>
<div style="left:724px;top:283px;width:1px;height:17px;background:#C8C8C8;"></div>
<div style="left:808px;top:283px;width:1px;height:17px;background:#C8C8C8;"></div>
<div style="left:861px;top:283px;width:1px;height:17px;background:#C8C8C8;"></div>
<div style="left:952px;top:283px;width:1px;height:17px;background:#C8C8C8;"></div>
<div class="t" style="left:31px;top:286px;color:#FFFFFF;letter-spacing:0.9px;transform-origin:0 0;-webkit-text-stroke:0px #FFFFFF;">001</div>
<div class="t" style="left:61px;top:286px;color:#FFFFFF;letter-spacing:0.9px;transform-origin:0 0;-webkit-text-stroke:0px #FFFFFF;">P086</div>
<div class="t" style="left:112px;top:286px;color:#FFFFFF;letter-spacing:0.9px;transform-origin:0 0;-webkit-text-stroke:0px #FFFFFF;">C002</div>
<div class="t" style="left:163px;top:286px;color:#FFFFFF;letter-spacing:0.9px;transform-origin:0 0;-webkit-text-stroke:0px #FFFFFF;">ARXXXX</div>
<div class="t" style="right:719.10px;top:286px;color:#FFFFFF;letter-spacing:0.9px;transform-origin:100% 0;-webkit-text-stroke:0px #FFFFFF;text-align:right;">4,080.00</div>
<div class="t" style="right:646.10px;top:286px;color:#FFFFFF;letter-spacing:0.9px;transform-origin:100% 0;-webkit-text-stroke:0px #FFFFFF;text-align:right;">0.00</div>
<div class="t" style="right:565.40px;top:286px;color:#FFFFFF;font-weight:700;letter-spacing:0.5px;transform:scaleX(1.2);transform-origin:100% 0;-webkit-text-stroke:0.2px #FFFFFF;text-align:right;">4,080.00</div>
<div class="t" style="right:471.10px;top:286px;color:#FFFFFF;letter-spacing:0.9px;transform-origin:100% 0;-webkit-text-stroke:0px #FFFFFF;text-align:right;">0.00</div>
<div class="t" style="right:386.10px;top:286px;color:#FFFFFF;letter-spacing:0.9px;transform-origin:100% 0;-webkit-text-stroke:0px #FFFFFF;text-align:right;">0.00</div>
<div class="t" style="right:299.10px;top:286px;color:#FFFFFF;letter-spacing:0.9px;transform-origin:100% 0;-webkit-text-stroke:0px #FFFFFF;text-align:right;">3,539.45</div>
<div class="t" style="right:215.10px;top:286px;color:#FFFFFF;letter-spacing:0.9px;transform-origin:100% 0;-webkit-text-stroke:0px #FFFFFF;text-align:right;">0.00</div>
<div class="t" style="right:162.10px;top:286px;color:#FFFFFF;letter-spacing:0.9px;transform-origin:100% 0;-webkit-text-stroke:0px #FFFFFF;text-align:right;">0.00</div>
<div class="t" style="right:71.40px;top:286px;color:#FFFFFF;font-weight:700;letter-spacing:0.5px;transform:scaleX(1.2);transform-origin:100% 0;-webkit-text-stroke:0.2px #FFFFFF;text-align:right;">540.55</div>
<div style="left:953px;top:283px;width:38px;height:17px;overflow:hidden"><div class="t" style="right:-9px;top:3px;color:#FFFFFF;letter-spacing:0.9px;-webkit-text-stroke:0px">15.20</div></div>
<div style="left:17px;top:301px;width:11px;height:17px;background:#C0C0C0;"></div>
<div style="left:17px;top:301px;width:11px;height:1px;background:#FFFFFF;"></div>
<div style="left:17px;top:301px;width:1px;height:17px;background:#FFFFFF;"></div>
<div style="left:17px;top:318px;width:12px;height:1px;background:#000000;"></div>
<div style="left:28px;top:301px;width:1px;height:17px;background:#000000;"></div>
<div style="left:29px;top:301px;width:29px;height:17px;background:#FFFFE1;"></div>
<div style="left:161px;top:301px;width:66px;height:17px;background:#FFFFE1;"></div>
<div style="left:862px;top:301px;width:90px;height:17px;background:#C0DCC0;"></div>
<div style="left:29px;top:318px;width:962px;height:1px;background:#C8C8C8;"></div>
<div style="left:58px;top:301px;width:1px;height:17px;background:#C8C8C8;"></div>
<div style="left:109px;top:301px;width:1px;height:17px;background:#C8C8C8;"></div>
<div style="left:160px;top:301px;width:1px;height:17px;background:#C8C8C8;"></div>
<div style="left:227px;top:301px;width:1px;height:17px;background:#C8C8C8;"></div>
<div style="left:304px;top:301px;width:1px;height:17px;background:#C8C8C8;"></div>
<div style="left:377px;top:301px;width:1px;height:17px;background:#C8C8C8;"></div>
<div style="left:458px;top:301px;width:1px;height:17px;background:#C8C8C8;"></div>
<div style="left:552px;top:301px;width:1px;height:17px;background:#C8C8C8;"></div>
<div style="left:637px;top:301px;width:1px;height:17px;background:#C8C8C8;"></div>
<div style="left:724px;top:301px;width:1px;height:17px;background:#C8C8C8;"></div>
<div style="left:808px;top:301px;width:1px;height:17px;background:#C8C8C8;"></div>
<div style="left:861px;top:301px;width:1px;height:17px;background:#C8C8C8;"></div>
<div style="left:952px;top:301px;width:1px;height:17px;background:#C8C8C8;"></div>
<div class="t" style="left:31px;top:304px;color:#000;letter-spacing:0.9px;transform-origin:0 0;-webkit-text-stroke:0px #000;">002</div>
<div class="t" style="left:61px;top:304px;color:#800000;letter-spacing:0.9px;transform-origin:0 0;-webkit-text-stroke:0px #800000;">P086</div>
<div class="t" style="left:112px;top:304px;color:#0000FF;letter-spacing:0.9px;transform-origin:0 0;-webkit-text-stroke:0px #0000FF;">C002</div>
<div class="t" style="left:163px;top:304px;color:#008000;letter-spacing:0.9px;transform-origin:0 0;-webkit-text-stroke:0px #008000;">ARXXXX</div>
<div class="t" style="right:719.10px;top:304px;color:#000;letter-spacing:0.9px;transform-origin:100% 0;-webkit-text-stroke:0px #000;text-align:right;">4,320.00</div>
<div class="t" style="right:646.10px;top:304px;color:#000;letter-spacing:0.9px;transform-origin:100% 0;-webkit-text-stroke:0px #000;text-align:right;">0.00</div>
<div class="t" style="right:565.40px;top:304px;color:#000;font-weight:700;letter-spacing:0.5px;transform:scaleX(1.2);transform-origin:100% 0;-webkit-text-stroke:0.2px #000;text-align:right;">4,320.00</div>
<div class="t" style="right:471.10px;top:304px;color:#000;letter-spacing:0.9px;transform-origin:100% 0;-webkit-text-stroke:0px #000;text-align:right;">0.00</div>
<div class="t" style="right:386.10px;top:304px;color:#000;letter-spacing:0.9px;transform-origin:100% 0;-webkit-text-stroke:0px #000;text-align:right;">0.00</div>
<div class="t" style="right:299.10px;top:304px;color:#000;letter-spacing:0.9px;transform-origin:100% 0;-webkit-text-stroke:0px #000;text-align:right;">3,539.45</div>
<div class="t" style="right:215.10px;top:304px;color:#000;letter-spacing:0.9px;transform-origin:100% 0;-webkit-text-stroke:0px #000;text-align:right;">0.00</div>
<div class="t" style="right:162.10px;top:304px;color:#000;letter-spacing:0.9px;transform-origin:100% 0;-webkit-text-stroke:0px #000;text-align:right;">0.00</div>
<div class="t" style="right:71.40px;top:304px;color:#000;font-weight:700;letter-spacing:0.5px;transform:scaleX(1.2);transform-origin:100% 0;-webkit-text-stroke:0.2px #000;text-align:right;">780.55</div>
<div style="left:953px;top:301px;width:38px;height:17px;overflow:hidden"><div class="t" style="right:-9px;top:3px;color:#000;letter-spacing:0.9px;-webkit-text-stroke:0px">22.00</div></div>
<div style="left:17px;top:319px;width:11px;height:17px;background:#C0C0C0;"></div>
<div style="left:17px;top:319px;width:11px;height:1px;background:#FFFFFF;"></div>
<div style="left:17px;top:319px;width:1px;height:17px;background:#FFFFFF;"></div>
<div style="left:17px;top:336px;width:12px;height:1px;background:#000000;"></div>
<div style="left:28px;top:319px;width:1px;height:17px;background:#000000;"></div>
<div style="left:29px;top:319px;width:29px;height:17px;background:#FFFFE1;"></div>
<div style="left:161px;top:319px;width:66px;height:17px;background:#FFFFE1;"></div>
<div style="left:862px;top:319px;width:90px;height:17px;background:#C0DCC0;"></div>
<div style="left:29px;top:336px;width:962px;height:1px;background:#C8C8C8;"></div>
<div style="left:58px;top:319px;width:1px;height:17px;background:#C8C8C8;"></div>
<div style="left:109px;top:319px;width:1px;height:17px;background:#C8C8C8;"></div>
<div style="left:160px;top:319px;width:1px;height:17px;background:#C8C8C8;"></div>
<div style="left:227px;top:319px;width:1px;height:17px;background:#C8C8C8;"></div>
<div style="left:304px;top:319px;width:1px;height:17px;background:#C8C8C8;"></div>
<div style="left:377px;top:319px;width:1px;height:17px;background:#C8C8C8;"></div>
<div style="left:458px;top:319px;width:1px;height:17px;background:#C8C8C8;"></div>
<div style="left:552px;top:319px;width:1px;height:17px;background:#C8C8C8;"></div>
<div style="left:637px;top:319px;width:1px;height:17px;background:#C8C8C8;"></div>
<div style="left:724px;top:319px;width:1px;height:17px;background:#C8C8C8;"></div>
<div style="left:808px;top:319px;width:1px;height:17px;background:#C8C8C8;"></div>
<div style="left:861px;top:319px;width:1px;height:17px;background:#C8C8C8;"></div>
<div style="left:952px;top:319px;width:1px;height:17px;background:#C8C8C8;"></div>
<div class="t" style="left:31px;top:322px;color:#000;letter-spacing:0.9px;transform-origin:0 0;-webkit-text-stroke:0px #000;">003</div>
<div class="t" style="left:61px;top:322px;color:#800000;letter-spacing:0.9px;transform-origin:0 0;-webkit-text-stroke:0px #800000;">P086</div>
<div class="t" style="left:112px;top:322px;color:#0000FF;letter-spacing:0.9px;transform-origin:0 0;-webkit-text-stroke:0px #0000FF;">C002</div>
<div class="t" style="left:163px;top:322px;color:#008000;letter-spacing:0.9px;transform-origin:0 0;-webkit-text-stroke:0px #008000;">ARXXXX</div>
<div class="t" style="right:719.10px;top:322px;color:#000;letter-spacing:0.9px;transform-origin:100% 0;-webkit-text-stroke:0px #000;text-align:right;">4,200.00</div>
<div class="t" style="right:646.10px;top:322px;color:#000;letter-spacing:0.9px;transform-origin:100% 0;-webkit-text-stroke:0px #000;text-align:right;">0.00</div>
<div class="t" style="right:565.40px;top:322px;color:#000;font-weight:700;letter-spacing:0.5px;transform:scaleX(1.2);transform-origin:100% 0;-webkit-text-stroke:0.2px #000;text-align:right;">4,200.00</div>
<div class="t" style="right:471.10px;top:322px;color:#000;letter-spacing:0.9px;transform-origin:100% 0;-webkit-text-stroke:0px #000;text-align:right;">0.00</div>
<div class="t" style="right:386.10px;top:322px;color:#000;letter-spacing:0.9px;transform-origin:100% 0;-webkit-text-stroke:0px #000;text-align:right;">0.00</div>
<div class="t" style="right:299.10px;top:322px;color:#000;letter-spacing:0.9px;transform-origin:100% 0;-webkit-text-stroke:0px #000;text-align:right;">3,539.45</div>
<div class="t" style="right:215.10px;top:322px;color:#000;letter-spacing:0.9px;transform-origin:100% 0;-webkit-text-stroke:0px #000;text-align:right;">0.00</div>
<div class="t" style="right:162.10px;top:322px;color:#000;letter-spacing:0.9px;transform-origin:100% 0;-webkit-text-stroke:0px #000;text-align:right;">0.00</div>
<div class="t" style="right:71.40px;top:322px;color:#000;font-weight:700;letter-spacing:0.5px;transform:scaleX(1.2);transform-origin:100% 0;-webkit-text-stroke:0.2px #000;text-align:right;">660.55</div>
<div style="left:953px;top:319px;width:38px;height:17px;overflow:hidden"><div class="t" style="right:-9px;top:3px;color:#000;letter-spacing:0.9px;-webkit-text-stroke:0px">18.60</div></div>
<div style="left:17px;top:337px;width:11px;height:17px;background:#C0C0C0;"></div>
<div style="left:17px;top:337px;width:11px;height:1px;background:#FFFFFF;"></div>
<div style="left:17px;top:337px;width:1px;height:17px;background:#FFFFFF;"></div>
<div style="left:17px;top:354px;width:12px;height:1px;background:#000000;"></div>
<div style="left:28px;top:337px;width:1px;height:17px;background:#000000;"></div>
<div style="left:29px;top:337px;width:29px;height:17px;background:#FFFFE1;"></div>
<div style="left:161px;top:337px;width:66px;height:17px;background:#FFFFE1;"></div>
<div style="left:862px;top:337px;width:90px;height:17px;background:#C0DCC0;"></div>
<div style="left:29px;top:354px;width:962px;height:1px;background:#C8C8C8;"></div>
<div style="left:58px;top:337px;width:1px;height:17px;background:#C8C8C8;"></div>
<div style="left:109px;top:337px;width:1px;height:17px;background:#C8C8C8;"></div>
<div style="left:160px;top:337px;width:1px;height:17px;background:#C8C8C8;"></div>
<div style="left:227px;top:337px;width:1px;height:17px;background:#C8C8C8;"></div>
<div style="left:304px;top:337px;width:1px;height:17px;background:#C8C8C8;"></div>
<div style="left:377px;top:337px;width:1px;height:17px;background:#C8C8C8;"></div>
<div style="left:458px;top:337px;width:1px;height:17px;background:#C8C8C8;"></div>
<div style="left:552px;top:337px;width:1px;height:17px;background:#C8C8C8;"></div>
<div style="left:637px;top:337px;width:1px;height:17px;background:#C8C8C8;"></div>
<div style="left:724px;top:337px;width:1px;height:17px;background:#C8C8C8;"></div>
<div style="left:808px;top:337px;width:1px;height:17px;background:#C8C8C8;"></div>
<div style="left:861px;top:337px;width:1px;height:17px;background:#C8C8C8;"></div>
<div style="left:952px;top:337px;width:1px;height:17px;background:#C8C8C8;"></div>
<div class="t" style="left:31px;top:340px;color:#000;letter-spacing:0.9px;transform-origin:0 0;-webkit-text-stroke:0px #000;">004</div>
<div class="t" style="left:61px;top:340px;color:#800000;letter-spacing:0.9px;transform-origin:0 0;-webkit-text-stroke:0px #800000;">P086</div>
<div class="t" style="left:112px;top:340px;color:#0000FF;letter-spacing:0.9px;transform-origin:0 0;-webkit-text-stroke:0px #0000FF;">C002</div>
<div class="t" style="left:163px;top:340px;color:#008000;letter-spacing:0.9px;transform-origin:0 0;-webkit-text-stroke:0px #008000;">ARXXXX</div>
<div class="t" style="right:719.10px;top:340px;color:#000;letter-spacing:0.9px;transform-origin:100% 0;-webkit-text-stroke:0px #000;text-align:right;">4,080.00</div>
<div class="t" style="right:646.10px;top:340px;color:#000;letter-spacing:0.9px;transform-origin:100% 0;-webkit-text-stroke:0px #000;text-align:right;">0.00</div>
<div class="t" style="right:565.40px;top:340px;color:#000;font-weight:700;letter-spacing:0.5px;transform:scaleX(1.2);transform-origin:100% 0;-webkit-text-stroke:0.2px #000;text-align:right;">4,080.00</div>
<div class="t" style="right:471.10px;top:340px;color:#000;letter-spacing:0.9px;transform-origin:100% 0;-webkit-text-stroke:0px #000;text-align:right;">0.00</div>
<div class="t" style="right:386.10px;top:340px;color:#000;letter-spacing:0.9px;transform-origin:100% 0;-webkit-text-stroke:0px #000;text-align:right;">0.00</div>
<div class="t" style="right:299.10px;top:340px;color:#000;letter-spacing:0.9px;transform-origin:100% 0;-webkit-text-stroke:0px #000;text-align:right;">3,539.45</div>
<div class="t" style="right:215.10px;top:340px;color:#000;letter-spacing:0.9px;transform-origin:100% 0;-webkit-text-stroke:0px #000;text-align:right;">0.00</div>
<div class="t" style="right:162.10px;top:340px;color:#000;letter-spacing:0.9px;transform-origin:100% 0;-webkit-text-stroke:0px #000;text-align:right;">0.00</div>
<div class="t" style="right:71.40px;top:340px;color:#000;font-weight:700;letter-spacing:0.5px;transform:scaleX(1.2);transform-origin:100% 0;-webkit-text-stroke:0.2px #000;text-align:right;">540.55</div>
<div style="left:953px;top:337px;width:38px;height:17px;overflow:hidden"><div class="t" style="right:-9px;top:3px;color:#000;letter-spacing:0.9px;-webkit-text-stroke:0px">15.20</div></div>
<div style="left:17px;top:355px;width:11px;height:17px;background:#C0C0C0;"></div>
<div style="left:17px;top:355px;width:11px;height:1px;background:#FFFFFF;"></div>
<div style="left:17px;top:355px;width:1px;height:17px;background:#FFFFFF;"></div>
<div style="left:17px;top:372px;width:12px;height:1px;background:#000000;"></div>
<div style="left:28px;top:355px;width:1px;height:17px;background:#000000;"></div>
<div style="left:29px;top:355px;width:29px;height:17px;background:#FFFFE1;"></div>
<div style="left:161px;top:355px;width:66px;height:17px;background:#FFFFE1;"></div>
<div style="left:862px;top:355px;width:90px;height:17px;background:#C0DCC0;"></div>
<div style="left:29px;top:372px;width:962px;height:1px;background:#C8C8C8;"></div>
<div style="left:58px;top:355px;width:1px;height:17px;background:#C8C8C8;"></div>
<div style="left:109px;top:355px;width:1px;height:17px;background:#C8C8C8;"></div>
<div style="left:160px;top:355px;width:1px;height:17px;background:#C8C8C8;"></div>
<div style="left:227px;top:355px;width:1px;height:17px;background:#C8C8C8;"></div>
<div style="left:304px;top:355px;width:1px;height:17px;background:#C8C8C8;"></div>
<div style="left:377px;top:355px;width:1px;height:17px;background:#C8C8C8;"></div>
<div style="left:458px;top:355px;width:1px;height:17px;background:#C8C8C8;"></div>
<div style="left:552px;top:355px;width:1px;height:17px;background:#C8C8C8;"></div>
<div style="left:637px;top:355px;width:1px;height:17px;background:#C8C8C8;"></div>
<div style="left:724px;top:355px;width:1px;height:17px;background:#C8C8C8;"></div>
<div style="left:808px;top:355px;width:1px;height:17px;background:#C8C8C8;"></div>
<div style="left:861px;top:355px;width:1px;height:17px;background:#C8C8C8;"></div>
<div style="left:952px;top:355px;width:1px;height:17px;background:#C8C8C8;"></div>
<div class="t" style="left:31px;top:358px;color:#000;letter-spacing:0.9px;transform-origin:0 0;-webkit-text-stroke:0px #000;">005</div>
<div class="t" style="left:61px;top:358px;color:#800000;letter-spacing:0.9px;transform-origin:0 0;-webkit-text-stroke:0px #800000;">P086</div>
<div class="t" style="left:112px;top:358px;color:#0000FF;letter-spacing:0.9px;transform-origin:0 0;-webkit-text-stroke:0px #0000FF;">C002</div>
<div class="t" style="left:163px;top:358px;color:#008000;letter-spacing:0.9px;transform-origin:0 0;-webkit-text-stroke:0px #008000;">ARXXXX</div>
<div class="t" style="right:719.10px;top:358px;color:#000;letter-spacing:0.9px;transform-origin:100% 0;-webkit-text-stroke:0px #000;text-align:right;">4,320.00</div>
<div class="t" style="right:646.10px;top:358px;color:#000;letter-spacing:0.9px;transform-origin:100% 0;-webkit-text-stroke:0px #000;text-align:right;">0.00</div>
<div class="t" style="right:565.40px;top:358px;color:#000;font-weight:700;letter-spacing:0.5px;transform:scaleX(1.2);transform-origin:100% 0;-webkit-text-stroke:0.2px #000;text-align:right;">4,320.00</div>
<div class="t" style="right:471.10px;top:358px;color:#000;letter-spacing:0.9px;transform-origin:100% 0;-webkit-text-stroke:0px #000;text-align:right;">0.00</div>
<div class="t" style="right:386.10px;top:358px;color:#000;letter-spacing:0.9px;transform-origin:100% 0;-webkit-text-stroke:0px #000;text-align:right;">0.00</div>
<div class="t" style="right:299.10px;top:358px;color:#000;letter-spacing:0.9px;transform-origin:100% 0;-webkit-text-stroke:0px #000;text-align:right;">3,539.45</div>
<div class="t" style="right:215.10px;top:358px;color:#000;letter-spacing:0.9px;transform-origin:100% 0;-webkit-text-stroke:0px #000;text-align:right;">0.00</div>
<div class="t" style="right:162.10px;top:358px;color:#000;letter-spacing:0.9px;transform-origin:100% 0;-webkit-text-stroke:0px #000;text-align:right;">0.00</div>
<div class="t" style="right:71.40px;top:358px;color:#000;font-weight:700;letter-spacing:0.5px;transform:scaleX(1.2);transform-origin:100% 0;-webkit-text-stroke:0.2px #000;text-align:right;">780.55</div>
<div style="left:953px;top:355px;width:38px;height:17px;overflow:hidden"><div class="t" style="right:-9px;top:3px;color:#000;letter-spacing:0.9px;-webkit-text-stroke:0px">22.00</div></div>
<div style="left:16px;top:265px;width:1px;height:352px;background:#FFFFFF;"></div>
<div style="left:17px;top:265px;width:1px;height:18px;background:#FFFFFF;"></div>
<svg style="left:20px;top:286px" width="7" height="11" viewBox="0 0 7 11"><path d="M0 0 L6.5 5.5 L0 11 Z" fill="#000"/></svg>
<div style="left:991px;top:265px;width:17px;height:352px;background:#FFFFFF;"></div>
<div style="left:991px;top:265px;width:1px;height:352px;background:#C8C8C8;"></div>
<div style="left:1007px;top:265px;width:1px;height:369px;background:#A0A0A0;"></div>
<div style="left:992px;top:281px;width:15px;height:1px;background:#C8C8C8;"></div>
<div style="left:992px;top:282px;width:15px;height:17px;background:#DCDCDC;"></div>
<div style="left:992px;top:299px;width:15px;height:1px;background:#C8C8C8;"></div>
<div style="left:992px;top:600px;width:15px;height:1px;background:#C8C8C8;"></div>
<svg style="left:995px;top:271px" width="9" height="6" viewBox="0 0 9 6"><path d="M0.5 5.5 L4.5 1.5 L8.5 5.5" fill="none" stroke="#606060" stroke-width="1.3"/></svg>
<svg style="left:995px;top:605px" width="9" height="6" viewBox="0 0 9 6"><path d="M0.5 0.5 L4.5 4.5 L8.5 0.5" fill="none" stroke="#606060" stroke-width="1.3"/></svg>
<div style="left:17px;top:617px;width:974px;height:17px;background:#FFFFFF;"></div>
<div style="left:17px;top:617px;width:974px;height:1px;background:#C8C8C8;"></div>
<div style="left:33px;top:618px;width:1px;height:16px;background:#C8C8C8;"></div>
<div style="left:34px;top:618px;width:17px;height:16px;background:#DCDCDC;"></div>
<div style="left:51px;top:618px;width:1px;height:16px;background:#C8C8C8;"></div>
<div style="left:974px;top:618px;width:1px;height:16px;background:#C8C8C8;"></div>
<div style="left:991px;top:617px;width:16px;height:17px;background:#F0F0F0;"></div>
<div style="left:991px;top:616px;width:16px;height:1px;background:#C8C8C8;"></div>
<div style="left:990px;top:617px;width:1px;height:17px;background:#C8C8C8;"></div>
<div style="left:16px;top:634px;width:992px;height:1px;background:#A0A0A0;"></div>
<svg style="left:22px;top:621px" width="6" height="9" viewBox="0 0 6 9"><path d="M5 0.5 L1 4.5 L5 8.5" fill="none" stroke="#606060" stroke-width="1.3"/></svg>
<svg style="left:980px;top:621px" width="6" height="9" viewBox="0 0 6 9"><path d="M1 0.5 L5 4.5 L1 8.5" fill="none" stroke="#606060" stroke-width="1.3"/></svg>
<div style="left:12px;top:647px;width:1000px;height:52px;border:1px solid #FFFFFF"></div>
<div style="left:11px;top:646px;width:1000px;height:52px;border:1px solid #A0A0A0"></div>
<div style="left:19px;top:640px;width:180px;height:12px;background:#F0F0F0;"></div>
<div class="t" style="left:19px;top:641px;color:#000;letter-spacing:0.9px;transform-origin:0 0;-webkit-text-stroke:0px #000;">Resumen de la Expedición en €</div>
<div class="t" style="left:179px;top:658px;color:#000;letter-spacing:0.9px;transform-origin:0 0;-webkit-text-stroke:0px #000;">Div.</div>
<div style="left:179px;top:672px;width:31px;height:19px;border-style:solid;border-width:1px;border-color:#A0A0A0 #FFFFFF #FFFFFF #A0A0A0"></div>
<div style="left:180px;top:673px;width:29px;height:17px;border-style:solid;border-width:1px;border-color:#696969 #E3E3E3 #E3E3E3 #696969;background:#FFFCE6"></div>
<div class="t" style="left:182px;top:676px;color:#000;font-weight:700;letter-spacing:0.3px;transform:scaleX(1.15);transform-origin:0 0;-webkit-text-stroke:0.2px #000;">EUR</div>
<div class="t" style="left:227px;top:658px;color:#000;letter-spacing:0.9px;transform-origin:0 0;-webkit-text-stroke:0px #000;">Fac.Exp.</div>
<div style="left:227px;top:672px;width:70px;height:19px;border-style:solid;border-width:1px;border-color:#A0A0A0 #FFFFFF #FFFFFF #A0A0A0"></div>
<div style="left:228px;top:673px;width:68px;height:17px;border-style:solid;border-width:1px;border-color:#696969 #E3E3E3 #E3E3E3 #696969;background:#F0F0F0"></div>
<div class="t" style="right:724.40px;top:676px;color:#000;font-weight:700;letter-spacing:0.5px;transform:scaleX(1.2);transform-origin:100% 0;-webkit-text-stroke:0.2px #000;text-align:right;">21,000.00</div>
<div class="t" style="left:307px;top:658px;color:#000;letter-spacing:0.9px;transform-origin:0 0;-webkit-text-stroke:0px #000;">Fac.Dir.</div>
<div style="left:307px;top:672px;width:63px;height:19px;border-style:solid;border-width:1px;border-color:#A0A0A0 #FFFFFF #FFFFFF #A0A0A0"></div>
<div style="left:308px;top:673px;width:61px;height:17px;border-style:solid;border-width:1px;border-color:#696969 #E3E3E3 #E3E3E3 #696969;background:#F0F0F0"></div>
<div class="t" style="right:651.40px;top:676px;color:#000;font-weight:700;letter-spacing:0.5px;transform:scaleX(1.2);transform-origin:100% 0;-webkit-text-stroke:0.2px #000;text-align:right;">0.00</div>
<div class="t" style="left:379px;top:658px;color:#000;letter-spacing:0.9px;transform-origin:0 0;-webkit-text-stroke:0px #000;">Total Fac.</div>
<div style="left:379px;top:672px;width:77px;height:19px;border-style:solid;border-width:1px;border-color:#A0A0A0 #FFFFFF #FFFFFF #A0A0A0"></div>
<div style="left:380px;top:673px;width:75px;height:17px;border-style:solid;border-width:1px;border-color:#696969 #E3E3E3 #E3E3E3 #696969;background:#F0F0F0"></div>
<div class="t" style="right:565.40px;top:676px;color:#0000FF;font-weight:700;letter-spacing:0.5px;transform:scaleX(1.2);transform-origin:100% 0;-webkit-text-stroke:0.2px #0000FF;text-align:right;">21,000.00</div>
<div class="t" style="left:467px;top:658px;color:#000;letter-spacing:0.9px;transform-origin:0 0;-webkit-text-stroke:0px #000;">T.Fletes</div>
<div style="left:467px;top:672px;width:77px;height:19px;border-style:solid;border-width:1px;border-color:#A0A0A0 #FFFFFF #FFFFFF #A0A0A0"></div>
<div style="left:468px;top:673px;width:75px;height:17px;border-style:solid;border-width:1px;border-color:#696969 #E3E3E3 #E3E3E3 #696969;background:#F0F0F0"></div>
<div class="t" style="right:477.40px;top:676px;color:#800000;font-weight:700;letter-spacing:0.5px;transform:scaleX(1.2);transform-origin:100% 0;-webkit-text-stroke:0.2px #800000;text-align:right;">0.00</div>
<div class="t" style="left:555px;top:658px;color:#000;letter-spacing:0.9px;transform-origin:0 0;-webkit-text-stroke:0px #000;">T.Gastos</div>
<div style="left:555px;top:672px;width:77px;height:19px;border-style:solid;border-width:1px;border-color:#A0A0A0 #FFFFFF #FFFFFF #A0A0A0"></div>
<div style="left:556px;top:673px;width:75px;height:17px;border-style:solid;border-width:1px;border-color:#696969 #E3E3E3 #E3E3E3 #696969;background:#F0F0F0"></div>
<div class="t" style="right:389.40px;top:676px;color:#800000;font-weight:700;letter-spacing:0.5px;transform:scaleX(1.2);transform-origin:100% 0;-webkit-text-stroke:0.2px #800000;text-align:right;">0.00</div>
<div class="t" style="left:643px;top:658px;color:#000;letter-spacing:0.9px;transform-origin:0 0;-webkit-text-stroke:0px #000;">T.Cta.Vta.</div>
<div style="left:643px;top:672px;width:77px;height:19px;border-style:solid;border-width:1px;border-color:#A0A0A0 #FFFFFF #FFFFFF #A0A0A0"></div>
<div style="left:644px;top:673px;width:75px;height:17px;border-style:solid;border-width:1px;border-color:#696969 #E3E3E3 #E3E3E3 #696969;background:#F0F0F0"></div>
<div class="t" style="right:301.40px;top:676px;color:#800000;font-weight:700;letter-spacing:0.5px;transform:scaleX(1.2);transform-origin:100% 0;-webkit-text-stroke:0.2px #800000;text-align:right;">17,697.24</div>
<div class="t" style="left:731px;top:658px;color:#000;letter-spacing:0.9px;transform-origin:0 0;-webkit-text-stroke:0px #000;">T.Comisión</div>
<div style="left:731px;top:672px;width:77px;height:19px;border-style:solid;border-width:1px;border-color:#A0A0A0 #FFFFFF #FFFFFF #A0A0A0"></div>
<div style="left:732px;top:673px;width:75px;height:17px;border-style:solid;border-width:1px;border-color:#696969 #E3E3E3 #E3E3E3 #696969;background:#F0F0F0"></div>
<div class="t" style="right:213.40px;top:676px;color:#0000FF;font-weight:700;letter-spacing:0.5px;transform:scaleX(1.2);transform-origin:100% 0;-webkit-text-stroke:0.2px #0000FF;text-align:right;">0.00</div>
<div class="t" style="left:811px;top:658px;color:#000;letter-spacing:0.9px;transform-origin:0 0;-webkit-text-stroke:0px #000;">%Com.</div>
<div style="left:811px;top:672px;width:38px;height:19px;border-style:solid;border-width:1px;border-color:#A0A0A0 #FFFFFF #FFFFFF #A0A0A0"></div>
<div style="left:812px;top:673px;width:36px;height:17px;border-style:solid;border-width:1px;border-color:#696969 #E3E3E3 #E3E3E3 #696969;background:#F0F0F0"></div>
<div class="t" style="left:814px;top:676px;color:#000;font-weight:700;letter-spacing:0.5px;transform:scaleX(1.2);transform-origin:0 0;-webkit-text-stroke:0.2px #000;">0.00</div>
<div class="t" style="left:859px;top:658px;color:#000;letter-spacing:0.9px;transform-origin:0 0;-webkit-text-stroke:0px #000;">T.Resultado</div>
<div style="left:859px;top:672px;width:86px;height:19px;border-style:solid;border-width:1px;border-color:#A0A0A0 #FFFFFF #FFFFFF #A0A0A0"></div>
<div style="left:860px;top:673px;width:84px;height:17px;border-style:solid;border-width:1px;border-color:#696969 #E3E3E3 #E3E3E3 #696969;background:#C0DCC0"></div>
<div class="t" style="right:76.40px;top:676px;color:#000;font-weight:700;letter-spacing:0.5px;transform:scaleX(1.2);transform-origin:100% 0;-webkit-text-stroke:0.2px #000;text-align:right;">3,302.76</div>
<div class="t" style="left:955px;top:658px;color:#000;letter-spacing:0.9px;transform-origin:0 0;-webkit-text-stroke:0px #000;">%Res.</div>
<div style="left:955px;top:672px;width:46px;height:19px;border-style:solid;border-width:1px;border-color:#A0A0A0 #FFFFFF #FFFFFF #A0A0A0"></div>
<div style="left:956px;top:673px;width:44px;height:17px;border-style:solid;border-width:1px;border-color:#696969 #E3E3E3 #E3E3E3 #696969;background:#00FF00"></div>
<div class="t" style="left:958px;top:676px;color:#000;font-weight:700;letter-spacing:0.5px;transform:scaleX(1.2);transform-origin:0 0;-webkit-text-stroke:0.2px #000;">18.66</div>
</body></html>
